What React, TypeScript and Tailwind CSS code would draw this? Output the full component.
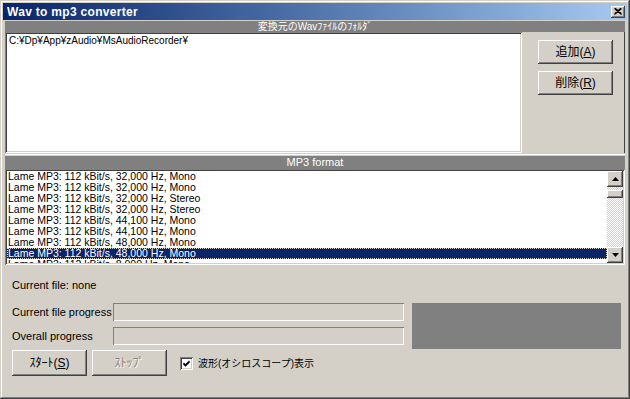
import React from 'react'

const font = { fontFamily: '"Liberation Sans", "Noto Sans CJK JP", sans-serif' }

const raised =
  'bg-[#d4d0c8] shadow-[inset_-1px_-1px_#404040,inset_1px_1px_#ffffff,inset_-2px_-2px_#808080,inset_2px_2px_#d4d0c8]'
const sunken =
  'shadow-[inset_1px_1px_#808080,inset_-1px_-1px_#ffffff,inset_2px_2px_#404040,inset_-2px_-2px_#d4d0c8]'
const thin = 'shadow-[inset_1px_1px_#808080,inset_-1px_-1px_#ffffff]'

const formats = [
  'Lame MP3: 112 kBit/s, 32,000 Hz, Mono',
  'Lame MP3: 112 kBit/s, 32,000 Hz, Mono',
  'Lame MP3: 112 kBit/s, 32,000 Hz, Stereo',
  'Lame MP3: 112 kBit/s, 32,000 Hz, Stereo',
  'Lame MP3: 112 kBit/s, 44,100 Hz, Mono',
  'Lame MP3: 112 kBit/s, 44,100 Hz, Mono',
  'Lame MP3: 112 kBit/s, 48,000 Hz, Mono',
  'Lame MP3: 112 kBit/s, 48,000 Hz, Mono',
  'Lame MP3: 112 kBit/s, 8,000 Hz, Mono',
]

const Button: React.FC<{ label: React.ReactNode; className?: string; disabled?: boolean }> = ({ label, className, disabled }) => (
  <div
    className={`${raised} flex items-center justify-center text-[12px] ${disabled ? 'text-[#808080] [text-shadow:1px_1px_#ffffff]' : 'text-black'} ${className ?? ''}`}
  >
    {label}
  </div>
)

const Arrow: React.FC<{ up?: boolean }> = ({ up }) => (
  <div className={`${raised} w-[16px] h-[16px] flex items-center justify-center`}>
    <svg width="7" height="4" viewBox="0 0 7 4">
      {up ? <polygon points="3.5,0 7,4 0,4" fill="#000" /> : <polygon points="0,0 7,0 3.5,4" fill="#000" />}
    </svg>
  </div>
)

export default function App() {
  return (
    <div
      style={font}
      className="w-[630px] h-[399px] bg-[#d4d0c8] p-[3px] flex flex-col shadow-[inset_-1px_-1px_#404040,inset_1px_1px_#d4d0c8,inset_-2px_-2px_#808080,inset_2px_2px_#ffffff]"
    >
      {/* title bar */}
      <div className="h-[17px] bg-linear-to-r from-[#0a246a] to-[#a6caf0] flex items-center justify-between pl-[4px] pr-[2px]">
        <span className="text-white font-bold text-[12px] tracking-[0.3px]">Wav to mp3 converter</span>
        <div className={`${raised} w-[14px] h-[12px] flex items-center justify-center`}>
          <svg width="8" height="7" viewBox="0 0 8 7">
            <path d="M0.5 0.5 L7.5 6.5 M1.5 0.5 L7.5 5.6 M7.5 0.5 L0.5 6.5 M6.5 0.5 L0.5 5.6" stroke="#000" strokeWidth="1.1" />
          </svg>
        </div>
      </div>

      <div className="flex flex-col px-[2px] pt-[1px] flex-1">
        <div className="h-[11px] bg-[#808080] text-white text-[10px] leading-[11px] text-center">変換元のWavﾌｧｲﾙのﾌｫﾙﾀﾞ</div>
        <div className="flex h-[121px]">
          <div className={`w-[517px] bg-white ${sunken} px-[4px] pt-[3px] text-[10px] leading-[11px]`}>
            C:¥Dp¥App¥zAudio¥MsAudioRecorder¥
          </div>
          <div className="flex-1 flex flex-col items-start gap-[7px] pt-[8px] pl-[16px] shadow-[inset_-1px_0_#404040]">
            <Button label={<span>追加(<u>A</u>)</span>} className="w-[75px] h-[24px]" />
            <Button label={<span>削除(<u>R</u>)</span>} className="w-[75px] h-[24px]" />
          </div>
        </div>
        <div className="h-[2px] mt-[1px] border-t border-[#ffffff]" />
        <div className="h-[13px] bg-[#808080] text-white text-[11px] leading-[13px] text-center">MP3 format</div>
        <div className={`h-[96px] bg-white ${sunken} flex p-[2px]`}>
          <div className="flex-1 overflow-hidden text-[10.5px] leading-[11px] text-black">
            {formats.map((f, i) => (
              <div
                key={i}
                className={`h-[11px] pl-[1px] whitespace-nowrap ${i === 7 ? 'bg-[#0a246a] text-white outline-1 outline-dotted outline-[#d4d0c8] -outline-offset-1' : ''}`}
              >
                {f}
              </div>
            ))}
          </div>
          <div className="w-[16px] flex flex-col">
            <Arrow up />
            <div className="flex-1 bg-[repeating-conic-gradient(#d4d0c8_0_25%,#ffffff_0_50%)] bg-size-[2px_2px] pt-[3px]">
              <div className={`${raised} h-[8px]`} />
            </div>
            <Arrow />
          </div>
        </div>

        {/* bottom */}
        <div className="flex-1 flex flex-col pl-[7px] pt-[13px] text-[11px] text-black">
          <div className="h-[14px] leading-[14px]">Current file: none</div>
          <div className="flex gap-[8px] mt-[11px]">
            <div className="flex flex-col gap-[6px]">
              <div className="flex items-center h-[18px]">
                <span className="w-[101px]">Current file progress</span>
                <div className={`w-[291px] h-[18px] ${thin}`} />
              </div>
              <div className="flex items-center h-[18px]">
                <span className="w-[101px]">Overall progress</span>
                <div className={`w-[291px] h-[18px] ${thin}`} />
              </div>
            </div>
            <div className="w-[209px] h-[46px] bg-[#808080]" />
          </div>
          <div className="flex items-center mt-[1px]">
            <Button label={<span>ｽﾀｰﾄ(<u>S</u>)</span>} className="w-[75px] h-[26px]" />
            <Button label="ｽﾄｯﾌﾟ" disabled className="w-[75px] h-[26px] ml-[5px]" />
            <div className={`ml-[13px] w-[13px] h-[13px] bg-white ${sunken} flex items-center justify-center`}>
              <svg width="7" height="7" viewBox="0 0 7 7">
                <path d="M0.5 3 L2.5 5 L6.5 1 M0.5 4 L2.5 6 L6.5 2" stroke="#000" strokeWidth="1.2" fill="none" />
              </svg>
            </div>
            <span className="ml-[5px] text-[10px]">波形(オシロスコープ)表示</span>
          </div>
        </div>
      </div>
    </div>
  )
}
